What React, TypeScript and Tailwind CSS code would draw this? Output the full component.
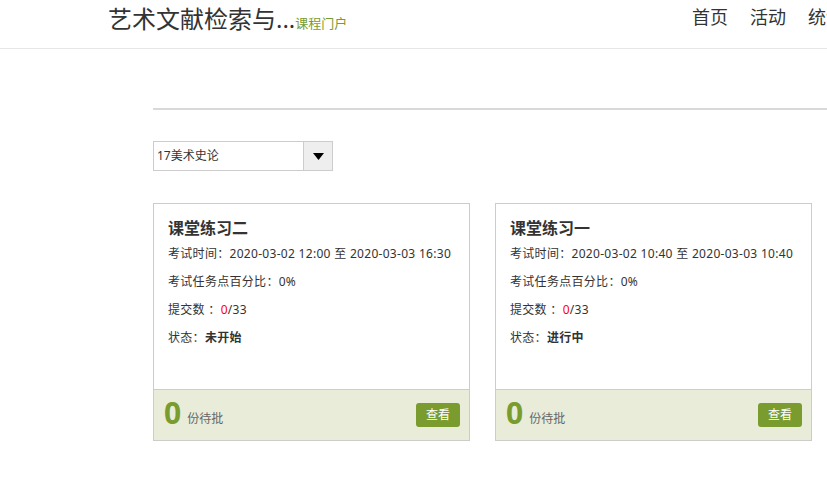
import React from "react";

const font = { fontFamily: '"Noto Sans", "Noto Sans CJK SC", sans-serif' };

type Exam = {
  title: string;
  start: string;
  end: string;
  status: string;
};

const exams: Exam[] = [
  { title: "课堂练习二", start: "2020-03-02 12:00", end: "2020-03-03 16:30", status: "未开始" },
  { title: "课堂练习一", start: "2020-03-02 10:40", end: "2020-03-03 10:40", status: "进行中" },
];

function ExamCard({ exam }: { exam: Exam }) {
  return (
    <div className="w-[317px] h-[238px] border border-[#cccccc] bg-white flex flex-col">
      <div className="flex-1 pl-[14px] pt-[12px] text-[#333333]">
        <div className="text-[16px] leading-[24px] font-bold">{exam.title}</div>
        <div className="text-[12px] leading-[28px] tracking-[0.3px]">
          考试时间：{exam.start} 至 {exam.end}
        </div>
        <div className="text-[12px] leading-[28px] tracking-[0.3px]">考试任务点百分比：0%</div>
        <div className="text-[12px] leading-[28px] tracking-[0.3px]">
          提交数&nbsp;：<span className="text-[#ff0000]">0</span>/33
        </div>
        <div className="text-[12px] leading-[28px] tracking-[0.3px]">
          状态：<span className="font-bold">{exam.status}</span>
        </div>
      </div>
      <div className="h-[51px] border-t border-[#cccccc] bg-[#e8ecd9] flex items-center pl-[10px] pr-[9px]">
        <span className="text-[30px] leading-[30px] font-bold text-[#7a9c2e] mb-[4px]">0</span>
        <span className="text-[12px] text-[#666666] ml-[6px] mt-[8px]">份待批</span>
        <button className="ml-auto w-[44px] h-[24px] rounded-[3px] bg-[#7a9c2e] text-white text-[12px] leading-[24px]">
          查看
        </button>
      </div>
    </div>
  );
}

export default function App() {
  return (
    <div className="w-[827px] h-[497px] overflow-hidden bg-white" style={font}>
      <header className="h-[49px] border-b border-[#e6e6e6] flex items-start">
        <div className="w-[692px] pl-[108px] pt-[4px] flex items-baseline shrink-0">
          <span className="text-[24px] leading-[30px] text-[#333333] whitespace-nowrap">艺术文献检索与...</span>
          <span className="text-[13px] text-[#7a9c2e] whitespace-nowrap">课程门户</span>
        </div>
        <nav className="flex gap-[22px] pt-[5px] text-[18px] leading-[24px] text-[#333333] whitespace-nowrap shrink-0">
          <span>首页</span>
          <span>活动</span>
          <span>统计</span>
        </nav>
      </header>

      <div className="pl-[153px]">
        <div className="mt-[59px] h-[2px] bg-[#d9d9d9]" />

        <div className="mt-[31px] w-[180px] h-[30px] border border-[#cccccc] flex">
          <div className="flex-1 pl-[3px] text-[12px] leading-[28px] text-[#333333]">17美术史论</div>
          <div className="w-[29px] border-l border-[#cccccc] bg-[#eeeeee] flex items-center justify-center">
            <svg width="11" height="7" viewBox="0 0 11 7">
              <path d="M0 0 L11 0 L5.5 7 Z" fill="#000" />
            </svg>
          </div>
        </div>

        <div className="mt-[32px] flex gap-[25px]">
          {exams.map((e) => (
            <ExamCard key={e.title} exam={e} />
          ))}
        </div>
      </div>
    </div>
  );
}
